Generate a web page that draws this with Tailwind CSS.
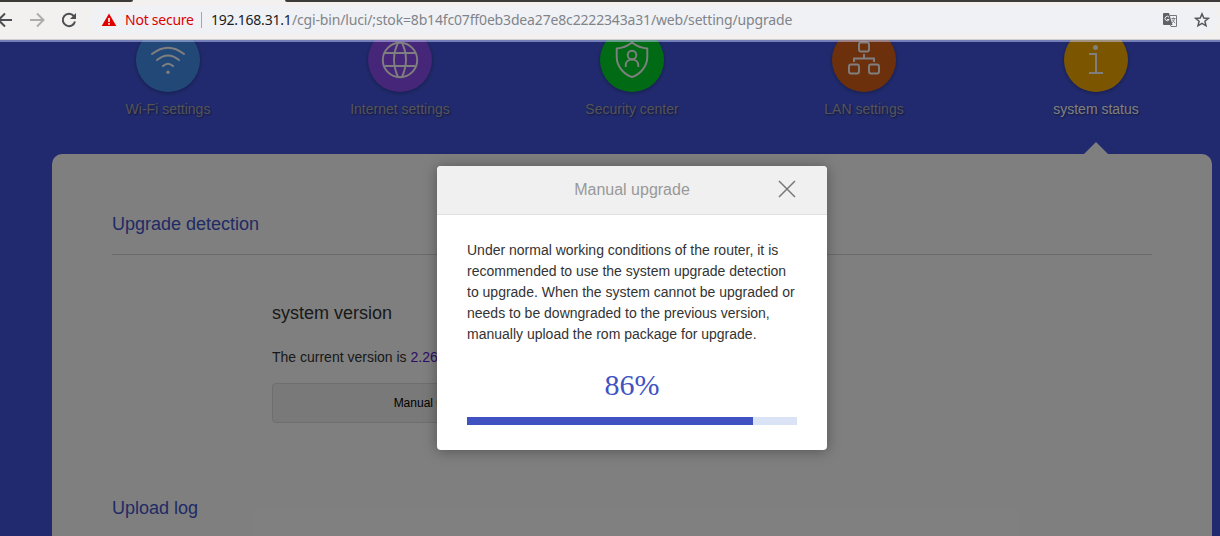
<!DOCTYPE html>
<html lang="en">
<head>
<meta charset="utf-8">
<title>Manual upgrade</title>
<script src="https://cdn.jsdelivr.net/npm/@tailwindcss/browser@4"></script>
</head>
<body class="w-[1220px] h-[536px] overflow-hidden flex flex-col bg-[#4255dc] font-['Liberation_Sans',Arial,sans-serif] text-sm text-[#333]">

<!-- Browser toolbar -->
<header class="relative h-10 shrink-0 bg-[#f2f1f0] border-b border-[#d0d0d3] pt-[6px] flex items-start text-[#5f6368] font-['Noto_Sans',sans-serif]">
  <div class="absolute top-0 left-0 w-[133px] h-[2px] bg-[#3c3b37] rounded-br-sm"></div>
  <div class="absolute top-0 left-[285px] right-0 h-[2px] bg-[#3c3b37] rounded-bl-sm"></div>
  <svg class="w-[90px] h-7 shrink-0" viewBox="0 0 90 28" fill="none" stroke-width="2">
    <path d="M12 14H-1M5 7.5L-1.500 14L5 20.500" stroke="#4c4e52"/>
    <path d="M30 14H43M37 7.500L43.500 14L37 20.500" stroke="#acadae"/>
    <path d="M73.800 10A6.200 6.200 0 1 0 75 15.500" stroke="#4c4e52"/>
    <path d="M76 7V13H70Z" fill="#4c4e52"/>
  </svg>
  <div class="w-[1128px] h-7 rounded-full bg-[#f0f1f4] flex items-center pl-[11px]">
    <svg class="w-4 h-4 shrink-0" viewBox="0 0 16 16"><path d="M8 1.500L15.300 14H.7Z" fill="#e00000"/><path d="M8 6V10M8 11V12.700" stroke="#fff" stroke-width="1.600"/></svg>
    <span class="ml-2 w-[69px] whitespace-nowrap text-sm text-[#dd0000] tracking-[-0.24px]">Not secure</span>
    <span class="ml-[7px] w-px h-4 bg-[#a5a7ab]"></span>
    <span class="ml-[9px] w-[81px] whitespace-nowrap text-sm text-[#202124] tracking-[-0.24px]">192.168.31.1</span>
    <span class="w-[502px] whitespace-nowrap text-sm text-[#80848a] tracking-[-0.16px]">/cgi-bin/luci/;stok=8b14fc07ff0eb3dea27e8c2222343a31/web/setting/upgrade</span>
    <svg class="ml-[368px] w-4 h-4 shrink-0" viewBox="0 0 16 16">
      <path d="M2 1H7L10.500 13H2Q1 13 1 12V2Q1 1 2 1Z" fill="#5f6368"/>
      <path d="M8 3.500H14.500V14.500H9L8.200 12" fill="none" stroke="#74777b"/>
      <path d="M7 5.200A2.200 2.200 0 1 0 7.200 7.500H5" fill="none" stroke="#f0f1f4"/>
      <path d="M9.500 6.500H13.500M11.500 5.500V6.500M12.700 6.500Q12 9.500 9.800 11M10.300 7.500Q11.500 10 13.200 11" fill="none" stroke="#74777b" stroke-width=".9"/>
    </svg>
    <svg class="ml-4 w-4 h-4 shrink-0" viewBox="0 0 16 16" fill="none" stroke="#55585d" stroke-width="1.500"><path d="M8 1.900L9.800 6.100L14.300 6.400L10.900 9.300L12 13.800L8 11.400L4 13.800L5.100 9.300L1.700 6.400L6.200 6.100Z"/></svg>
  </div>
</header>

<!-- Router settings page -->
<main class="relative flex-1 min-h-0 overflow-hidden">
  <nav class="-mt-3 ml-[52px] w-[1160px] grid grid-cols-5 text-[#a9a9b4] [text-shadow:1px_1px_2px_rgba(0,0,0,.5)]">
    <div class="flex flex-col items-center gap-2">
      <span class="size-16 rounded-full bg-[#4590f0] shadow-[0_1px_4px_rgba(0,0,0,.3)]">
        <svg viewBox="0 0 64 64" fill="none" stroke="#fff" stroke-width="2" stroke-linecap="round"><path d="M16 26Q32 13.500 48 26M21 32Q32 23 43 32M27 38Q32 33.500 37 38"/><circle cx="32" cy="44.300" r="1.700" fill="#fff" stroke="none"/></svg>
      </span>
      <span class="leading-[18px]">Wi-Fi settings</span>
    </div>
    <div class="flex flex-col items-center gap-2">
      <span class="size-16 rounded-full bg-[#8b4cf0] shadow-[0_1px_4px_rgba(0,0,0,.3)]">
        <svg viewBox="0 0 64 64" fill="none" stroke="#fff" stroke-width="1.900"><circle cx="32" cy="32" r="17.200"/><path d="M17 25H47M17 38H47M30 15Q22 31 30 49M34 15Q42 31 34 49"/></svg>
      </span>
      <span class="leading-[18px]">Internet settings</span>
    </div>
    <div class="flex flex-col items-center gap-2">
      <span class="size-16 rounded-full bg-[#00d728] shadow-[0_1px_4px_rgba(0,0,0,.3)]">
        <svg viewBox="0 0 64 64" fill="none" stroke="#fff" stroke-width="1.900"><path d="M32 14.500Q39 20 47.300 20.500V29C47.300 38.500 40 46.500 32 49C24 46.500 16.700 38.500 16.700 29V20.500Q25 20 32 14.500Z"/><circle cx="32" cy="27" r="4.300"/><path d="M25.700 39V37.500C25.700 29.500 38.300 29.500 38.300 37.500V39"/></svg>
      </span>
      <span class="leading-[18px]">Security center</span>
    </div>
    <div class="flex flex-col items-center gap-2">
      <span class="size-16 rounded-full bg-[#d86018] shadow-[0_1px_4px_rgba(0,0,0,.3)]">
        <svg viewBox="0 0 64 64" fill="none" stroke="#fff" stroke-width="1.900"><rect x="27" y="14.500" width="10" height="9" rx="2"/><rect x="17" y="36.500" width="10" height="9" rx="2"/><rect x="37" y="36.500" width="10" height="9" rx="2"/><path d="M32 26V30.500M22 34V30.500H42V34"/></svg>
      </span>
      <span class="leading-[18px]">LAN settings</span>
    </div>
    <div class="flex flex-col items-center gap-2 text-white">
      <span class="size-16 rounded-full bg-[#f8ab00] shadow-[0_1px_4px_rgba(0,0,0,.3)]">
        <svg viewBox="0 0 64 64" fill="none" stroke="#fff" stroke-width="2"><circle cx="31.500" cy="19.500" r="2.500" fill="#fff" stroke="none"/><path d="M25 26H32V45M25 45H39"/></svg>
      </span>
      <span class="leading-[18px]">system status</span>
    </div>
  </nav>

  <div class="mt-6 ml-[1084px] w-6 h-3 bg-white [clip-path:polygon(50%_0,100%_100%,0_100%)]"></div>
  <section class="ml-[52px] w-[1160px] h-[400px] rounded-t-[10px] bg-white px-[60px] pt-[60px]">
    <h2 class="h-[41px] border-b border-[#d5d5d5] text-lg leading-5 text-[#4255c8]">Upgrade detection</h2>
    <div class="ml-40 mt-12">
      <h3 class="text-lg leading-5">system version</h3>
      <p class="mt-6 leading-5">The current version is <span class="text-[#5520c8]">2.26.175</span></p>
      <div class="mt-4 w-[330px] h-10 rounded border border-[#dcdcdc] bg-[#f2f2f2] flex items-center justify-center text-xs text-black">Manual upgrade</div>
    </div>
    <h2 class="mt-[75px] text-lg leading-5 text-[#4255c8]">Upload log</h2>
  </section>

  <!-- Dimmed backdrop and dialog -->
  <div class="absolute inset-0 bg-black/50"></div>
  <div class="absolute top-0 inset-x-0 h-[2px] bg-[#c5d0ff]/50"></div>
  <div class="absolute left-[437px] top-[126px] w-[390px] h-[284px] rounded bg-white shadow-[0_1px_14px_rgba(0,0,0,.35)] overflow-hidden">
    <div class="relative h-[49px] bg-[#f0f0f0] border-b border-[#e0e0e0] text-center text-base leading-[47px] text-[#999]">Manual upgrade
      <svg class="absolute left-[341px] top-[14px] size-[18px]" viewBox="0 0 18 18" stroke="#777" stroke-width="1.500"><path d="M1 1L17 17M17 1L1 17"/></svg>
    </div>
    <div class="px-[30px] pt-[25px]">
      <p class="leading-[21px] whitespace-nowrap">Under normal working conditions of the router, it is<br>recommended to use the system upgrade detection<br>to upgrade. When the system cannot be upgraded or<br>needs to be downgraded to the previous version,<br>manually upload the rom package for upgrade.</p>
      <div class="mt-[21px] h-[51px] text-center text-[30px] leading-[38px] text-[#4153c3] font-['Liberation_Serif',serif]">86%</div>
      <div class="h-2 bg-[#dae3f5]"><div class="h-2 bg-[#4051c2]" style="width:286px"></div></div>
    </div>
  </div>
</main>
</body>
</html>
